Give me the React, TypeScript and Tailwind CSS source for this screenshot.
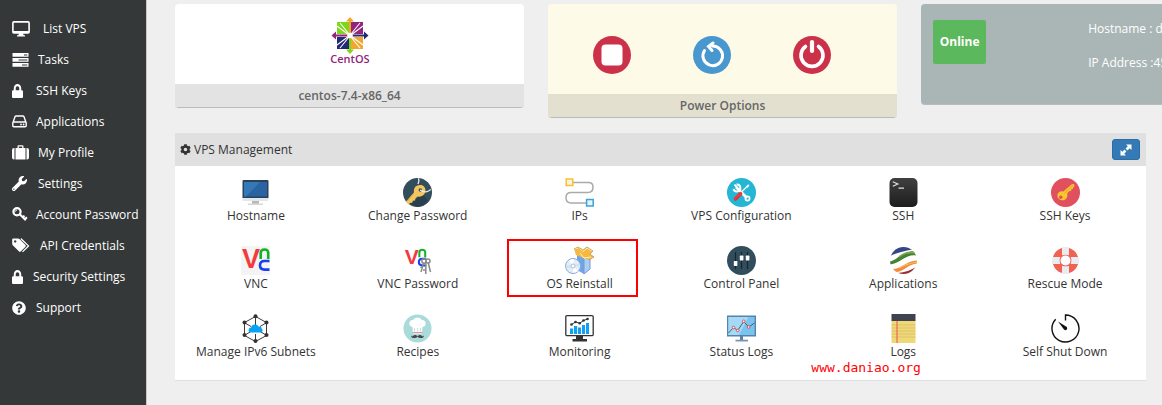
import React from "react";
import { FaCog, FaLock, FaQuestionCircle, FaWrench } from "react-icons/fa";

type Item = { label: string; icon: React.ReactNode };

/* ---------- Sidebar icons ---------- */

const DesktopIcon = () => (
  <svg width="18" height="16" viewBox="0 0 18 16" fill="none">
    <rect x="0.9" y="0.9" width="16.2" height="11" rx="1" stroke="#fff" strokeWidth="1.6" />
    <path d="M1 10h16v2H1zM7 12h4l.6 2.2H13V15.500H5v-1.300h1.400z" fill="#fff" />
  </svg>
);

const TasksIcon = () => (
  <svg width="17" height="14" viewBox="0 0 17 14">
    <path fill="#fff" d="M.5 0h16v3.800H.5zM.5 5h16v3.800H.5zM.5 10h16v3.800H.5z" />
    <path fill="#343838" d="M12 1.400h3.300v1H12zM6.500 6.400h8.800v1H6.500zM10 11.400h5.300v1H10z" />
  </svg>
);

const DriveIcon = () => (
  <svg width="15" height="13" viewBox="0 0 15 13">
    <path
      d="M1 7.500 3 1.800Q3.300 1 4.200 1h6.600q.9 0 1.200.8L14 7.500M1.600 7h11.800q.8 0 .8.800v3q0 1-1 1H1.800q-1 0-1-1v-3q0-.8.8-.8z"
      fill="none"
      stroke="#fff"
      strokeWidth="1.400"
    />
    <circle cx="9" cy="9.500" r=".9" fill="#fff" />
    <circle cx="11.600" cy="9.500" r=".9" fill="#fff" />
  </svg>
);

const SuitcaseIcon = () => (
  <svg width="17" height="15" viewBox="0 0 17 15">
    <path
      fill="#fff"
      d="M2.500 3v11.500H2q-2 0-2-2V5q0-2 2-2zM3.500 3h2V1.300Q5.500.2 6.600.2h3.800q1.100 0 1.100 1.100V3h2v11.500h-10zM6.800 3h3.400V1.500H6.800zM14.500 3h.5q2 0 2 2v7.500q0 2-2 2h-.5z"
      fillRule="evenodd"
    />
  </svg>
);

const KeyIcon = () => (
  <svg width="16" height="15" viewBox="0 0 16 15" fill="none" stroke="#fff">
    <circle cx="5" cy="4.800" r="3.600" strokeWidth="2.200" />
    <path d="m7.500 7 6.300 6.300M10.300 10.800l2.200-2.200M12.300 12.800l2.600-2.600" strokeWidth="2" />
    <path d="m2.600 4.800 2.400-2" strokeWidth="1" />
  </svg>
);

const TagsIcon = () => (
  <svg width="18" height="15" viewBox="0 0 18 15">
    <path
      fill="#fff"
      fillRule="evenodd"
      d="M1.200.5H6q.8 0 1.500.6l6 6q.8.8 0 1.600L8.700 13.600q-.8.700-1.600 0L1 7.500Q.2 6.700.2 5.800V1.500q0-1 1-1zm2 1.700a1.200 1.200 0 1 0 .01 0z"
    />
    <path d="M8.800 1h.4l7.300 6.900-6 6" fill="none" stroke="#fff" strokeWidth="1.300" />
  </svg>
);

const lock = <FaLock className="h-[14px] w-[11px]" preserveAspectRatio="none" />;

const menu: (Item & { slot: string })[] = [
  { label: "List VPS", icon: <DesktopIcon />, slot: "w-[23px]" },
  { label: "Tasks", icon: <TasksIcon />, slot: "w-[18px]" },
  { label: "SSH Keys", icon: lock, slot: "w-4" },
  { label: "Applications", icon: <DriveIcon />, slot: "w-4" },
  { label: "My Profile", icon: <SuitcaseIcon />, slot: "w-[18px]" },
  { label: "Settings", icon: <FaWrench className="size-[15px]" />, slot: "w-[18px]" },
  { label: "Account Password", icon: <KeyIcon />, slot: "w-4" },
  { label: "API Credentials", icon: <TagsIcon />, slot: "w-5" },
  { label: "Security Settings", icon: lock, slot: "w-[13px]" },
  { label: "Support", icon: <FaQuestionCircle className="size-[14px]" />, slot: "w-4" },
];

/* ---------- Panel icons ---------- */

const Art = ({ children }: { children: React.ReactNode }) => (
  <svg width="29" height="29" viewBox="0 0 29 29" fill="none" aria-hidden="true">
    {children}
  </svg>
);

const HostnameArt = (
  <Art>
    <path d="M2.500 2h24q1 0 1 1v17h-26V3q0-1 1-1z" fill="#2c4258" />
    <path d="M1.500 20h26v2q0 1-1 1h-24q-1 0-1-1z" fill="#e4e7e9" />
    <path d="M3 4h23v14.500H3z" fill="#2a63a2" />
    <path d="M3 4h16L5 18.500H3z" fill="#3478b8" />
    <path d="M11 23h7v3h-7z" fill="#b4babe" />
    <path d="M7 25.500h15V27H7z" fill="#d6d9db" />
  </Art>
);

const ChangePasswordArt = (
  <Art>
    <circle cx="14.500" cy="14.500" r="14.500" fill="#324d5b" />
    <path d="m20 17 5 5q-4 6-11 7l-8-4z" fill="#293f4b" />
    <path
      d="M12.500 8.500q2-2 6-1.500 3.500 1 4 5-.2 4.500-3.500 6-2.500 1-4.500.5l-2.200 2.200-.2 1.800-2 .3-1 2-2.300.3-1 1.500-3-2.800 8-9q-.8-3.500 1.700-6.300z"
      fill="#f4c55c"
    />
    <path d="m11 15-7 8.500" stroke="#dba545" />
    <circle cx="17.300" cy="12" r="1.700" fill="#324d5b" />
    <path d="M15.500.3q1 2-.5 5.700M17 12q5 3 8.500 1l2.300-1.500" stroke="#e8eef0" strokeWidth="1.300" />
  </Art>
);

const IpsArt = (
  <Art>
    <path
      d="M8 4.500h15.500q4.500 0 4.500 4.500 0 5.500-5 5.500H6q-5 0-5 5.200 0 5.200 5 5.200h15"
      stroke="#aaa"
      strokeWidth="1.500"
    />
    <path d="M1.200 1h6.600v6.600H1.200z" fill="#f5f1e4" stroke="#fbc02d" strokeWidth="1.500" />
    <path d="M21.600 21.500h6.600v6.600h-6.600z" fill="#e7f3fa" stroke="#3ba3db" strokeWidth="1.500" />
  </Art>
);

const ConfigArt = (
  <Art>
    <circle cx="14.500" cy="14.500" r="14.500" fill="#24b6d4" />
    <path d="m9 9 11 11" stroke="#fff" strokeWidth="2.600" />
    <path d="M9.500 6.500a3.500 3.500 0 1 1-3 4.500M7.500 6.500l2 2.500" stroke="#fff" strokeWidth="2" />
    <circle cx="20.500" cy="20.500" r="2.100" stroke="#fff" strokeWidth="1.700" />
    <path d="m13.500 15 8-8" stroke="#eef4f6" strokeWidth="1.400" />
    <path d="m19 8.500 2.500-2 1 .8-2.200 2.800z" fill="#fff" />
    <path d="m8.500 20.800 5-5" stroke="#e53d3d" strokeWidth="3.800" strokeLinecap="round" />
    <path d="m8.300 22.500 4-4" stroke="#bd2f35" strokeWidth=".8" />
  </Art>
);

const SshArt = (
  <Art>
    <defs>
      <linearGradient id="terminal" x1="0" y1="0" x2="0" y2="1">
        <stop stopColor="#414141" />
        <stop offset=".55" stopColor="#2c2c2c" />
        <stop offset="1" stopColor="#1d1d1d" />
      </linearGradient>
    </defs>
    <rect x=".5" width="28" height="29" rx="5" fill="url(#terminal)" />
    <path d="m3.800 3.800 5 2.200-5 2.200M9.500 10.200h5.500" stroke="#e0e0e0" strokeWidth="1.200" />
  </Art>
);

const SshKeysArt = (
  <Art>
    <circle cx="14.500" cy="14.500" r="14.500" fill="#e0505e" />
    <path
      fillRule="evenodd"
      d="m12.300 13.500 8.500-7.300 2.200-.2.500 2.200-1.200 1-.2 1.500-1.700.3-.2 1.700-2 .5-2 2q1 4-2 6.200-3.300 2-6.200-.3-2.700-2.800-1-5.800 2-3 5.300-1.800zm-2.500 4a1.700 1.700 0 1 0 .01 0z"
      fill="#f8c62e"
    />
    <path d="m13.500 15 8.500-7.500" stroke="#dfa024" strokeWidth=".8" />
  </Art>
);

const VncLetters = () => (
  <g fontFamily="Liberation Sans, sans-serif" fontWeight="700">
    <text x="1" y="22" fontSize="27" fill="#f33a3d">V</text>
    <path d="M19.700 13V7q0-3.500 3.800-3.500T27.200 7v6" stroke="#10b422" strokeWidth="2.600" />
    <path d="M28.500 15h-5q-4.500 0-4.500 4.300t4.500 4.300h5" stroke="#1740f0" strokeWidth="2.600" />
  </g>
);

const VncArt = (
  <Art>
    <path d="M0 0h29v29H0z" fill="#f4f4f4" />
    <VncLetters />
  </Art>
);

const VncPasswordArt = (
  <Art>
    <g transform="translate(1 1) scale(.78)">
      <VncLetters />
    </g>
    <g stroke="#8a8a8a" strokeWidth="1.500">
      <circle cx="21" cy="15" r="2.200" />
      <circle cx="25" cy="15" r="2" />
      <path d="m20.500 17-2.500 9M22.800 17v11M25.300 17l2.200 9M19.500 22l-2-1M22 24h-2" />
    </g>
  </Art>
);

const ReinstallArt = (
  <Art>
    <path d="m12 9 7 4v15l-7-4z" fill="#6ba6e8" />
    <path d="m19 13 6-4v14l-6 5z" fill="#a9cff7" />
    <path d="M11.500 8.500 19 12.500v15.500l6-5V9.500" stroke="#7f94cf" />
    <path d="m9 3 4-2 5 3 4-3 6 4-3 3 4 3-6 3-4-2-8-3z" fill="#f6b83e" />
    <path d="m10 3 4-1.500 4 4 4-3.500 5 3M19 12l-4-5M19 12l7-1" stroke="#fff0b8" />
    <path d="m9 3 4-2 5 3 4-3 6 4-3 3 4 3-5 3" stroke="#b59158" strokeWidth=".7" />
    <circle cx="8" cy="20" r="7.500" fill="#e3edf8" stroke="#8fa8d8" />
    <path d="M8 20 4 14.500q3-2 5-1.500zM8 20l5 5q-2 2-5 1.500z" fill="#fff" />
    <path d="m8 20-6.500-1v4zM8 20l6.500-3v3z" fill="#cbe4ee" />
    <circle cx="8" cy="20" r="2" fill="#fff" stroke="#9aadd0" strokeWidth=".8" />
  </Art>
);

const ControlArt = (
  <Art>
    <circle cx="14.500" cy="14.500" r="14.500" fill="#324d5b" />
    <path d="M8.500 6v17M14.500 6v17M20.500 6v17" stroke="#16252e" strokeWidth="1.200" />
    <rect x="6.800" y="15" width="3.600" height="5" rx=".7" fill="#fff" />
    <rect x="12.800" y="9.500" width="3.600" height="5" rx=".7" fill="#fff" />
    <rect x="18.800" y="9.500" width="3.600" height="5" rx=".7" fill="#fff" />
  </Art>
);

const ApplicationsArt = (
  <Art>
    <defs>
      <clipPath id="globe">
        <circle cx="14.500" cy="14.500" r="13.500" />
      </clipPath>
    </defs>
    <g clipPath="url(#globe)">
      <path d="M1 10Q9 6 26 3L15-1H0z" fill="#354784" />
      <path d="M1 15.500C9 14 13 4 27 5.500v4C17 8 12 17 1 18.500z" fill="#478232" />
      <path d="M10 11q7-6 17-4" stroke="#7fa850" strokeWidth="1.500" />
      <path d="M2 23c10 1 14-8 26-8.500v3c-10 1-13 9-22 8.500z" fill="#f28b3c" />
      <path d="M10 22q7-4 18-6" stroke="#fac067" strokeWidth="1.200" />
      <path d="M9 27q10-1 19-6.500V30H9z" fill="#9a2f31" />
    </g>
  </Art>
);

const RescueArt = (
  <Art>
    <circle cx="14.500" cy="14.500" r="9" stroke="#f26253" strokeWidth="8" />
    <path d="M11 1.300q3.500-.8 7 0v8q-3.500-1.300-7 0zM11 27.700q3.500.8 7 0v-8q-3.500 1.300-7 0zM1.300 11q-.8 3.500 0 7h8q-1.300-3.500 0-7zM27.700 11q.8 3.500 0 7h-8q1.300-3.500 0-7z" fill="#e9edf0" />
  </Art>
);

const SubnetsArt = (
  <Art>
    <path
      d="m14.500 2.500 11 6v13l-11 6-11-6v-13zM14.500 3v8M14.500 20v7M4 9l6 3.500M25 9l-6 3.500M4 21l6-3.500M25 21l-6-3.500"
      stroke="#3b3b3b"
      strokeWidth="1"
    />
    <g fill="#333">
      <circle cx="14.500" cy="2.300" r="2" />
      <circle cx="25.500" cy="8.500" r="2" />
      <circle cx="25.500" cy="21" r="2" />
      <circle cx="14.500" cy="27" r="2" />
      <circle cx="3.500" cy="21" r="2" />
      <circle cx="3.500" cy="8.500" r="2" />
    </g>
    <path d="M10.500 18.500q-3 0-3-2.500 0-2.300 2.500-2.500.7-3 4-3 2.500-.2 3.500 2 3.200-.2 3.200 2.300 1 .7 1 1.700-.2 2-2.700 2z" fill="#08a3f2" />
  </Art>
);

const RecipesArt = (
  <Art>
    <circle cx="14.500" cy="14.500" r="14" fill="#a9dbda" />
    <path d="M9.500 13q-3.500-.7-3.200-4Q7 5.800 10 6q1.300-2.500 4.500-2.500T19 6q3-.2 3.700 3 .3 3.300-3.200 4l-.5 6.500H10z" fill="#fff" />
    <path d="M10 18.500h9.500" stroke="#f08a91" />
    <path d="M11.500 14v3.500M14.500 14v3.500M17.500 14v3.500" stroke="#ccd6da" strokeWidth=".9" />
    <path d="M8 21.500q.2 3 4 2.500 2-.3 2.500-1.500.5 1.200 2.500 1.500 3.800.5 4-2.500l-1.500 1q-1-2-3-1.500l-2 1-2-1q-2-.5-3 1.500z" fill="#46474c" />
  </Art>
);

const MonitoringArt = (
  <Art>
    <rect x=".8" y="1.600" width="27.400" height="20" rx="1.200" fill="#fff" stroke="#333" strokeWidth="1.300" />
    <path d="M11 22h7v3h4v2.500H7.500V25H11z" fill="#333" />
    <path d="M5 14.500h3.200V20H5zM9 12h3.200v8H9zM13 13.500h3V20h-3zM17 11h3v9h-3zM21 9h3v11h-3z" fill="#11a0f3" />
    <path d="M6.500 10.500 10.500 8l4.200 1.200L18.500 6.500l4-1.500" stroke="#333" strokeWidth="1" />
    <g fill="#333">
      <circle cx="6.500" cy="10.500" r="1.300" />
      <circle cx="10.500" cy="8" r="1.300" />
      <circle cx="14.700" cy="9.200" r="1.300" />
      <circle cx="18.500" cy="6.500" r="1.300" />
      <circle cx="22.500" cy="5" r="1.300" />
    </g>
  </Art>
);

const StatusArt = (
  <Art>
    <path d="M.7 2.200h27.600v19.600H.7z" fill="#76c4ef" stroke="#5a82a8" strokeWidth="1.400" />
    <path d="M1.400 3h20L12 21H1.400z" fill="#a4daf6" />
    <path d="M13 22h3v4h-3z" fill="#5d81a2" />
    <path d="M8.500 25.700H21V27.500H8.500z" fill="#7697b4" />
    <path d="m1.500 19 5-5.500 4.200 3 6-9 5 5.500L27.500 9" stroke="#41617d" strokeWidth="1" />
    <g fill="#fff" stroke="#e84a4a">
      <circle cx="6.500" cy="13.500" r="1.300" />
      <circle cx="10.700" cy="16.500" r="1.300" />
      <circle cx="16.700" cy="7.300" r="1.300" />
      <circle cx="21.700" cy="13" r="1.300" />
    </g>
  </Art>
);

const LogsArt = (
  <Art>
    <path d="M2.500 6.500h24V29h-24z" fill="#f0d878" />
    <path d="M2.500 0h24v7h-24z" fill="#3f4350" />
    <path d="M2.500 11h24M2.500 14h24M2.500 17h24M2.500 20h24M2.500 23h24" stroke="#d9c167" strokeWidth=".9" />
    <path d="M8 7v22" stroke="#f0524f" />
  </Art>
);

const ShutdownArt = (
  <Art>
    <path d="M14.500 6.500V1A13.500 13.500 0 1 1 4.700 5.200" stroke="#111" strokeWidth="1.400" />
    <path d="m7 7.500 8.800 5.500q1 1.500-.2 2.700-1.300 1-2.600-.2z" fill="#111" />
  </Art>
);

const tools: (Item & { marked?: boolean; note?: string })[] = [
  { label: "Hostname", icon: HostnameArt },
  { label: "Change Password", icon: ChangePasswordArt },
  { label: "IPs", icon: IpsArt },
  { label: "VPS Configuration", icon: ConfigArt },
  { label: "SSH", icon: SshArt },
  { label: "SSH Keys", icon: SshKeysArt },
  { label: "VNC", icon: VncArt },
  { label: "VNC Password", icon: VncPasswordArt },
  { label: "OS Reinstall", icon: ReinstallArt, marked: true },
  { label: "Control Panel", icon: ControlArt },
  { label: "Applications", icon: ApplicationsArt },
  { label: "Rescue Mode", icon: RescueArt },
  { label: "Manage IPv6 Subnets", icon: SubnetsArt },
  { label: "Recipes", icon: RecipesArt },
  { label: "Monitoring", icon: MonitoringArt },
  { label: "Status Logs", icon: StatusArt },
  { label: "Logs", icon: LogsArt, note: "www.daniao.org" },
  { label: "Self Shut Down", icon: ShutdownArt },
];

/* ---------- Cards ---------- */

const CentosLogo = () => (
  <svg width="40" height="50" viewBox="0 0 40 50" aria-label="CentOS">
    <path d="M7 5h12v12H7z" fill="#7cd61b" />
    <path d="M21 5h12v12H21z" fill="#93237c" />
    <path d="M7 20h12v12H7z" fill="#232a75" />
    <path d="M21 20h12v12H21z" fill="#f2a72b" />
    <path
      d="m10 6 9 11M7 9l12 9M30 6l-9 11M33 9l-12 9M10 31l9-11M7 28l12-9M30 31l-9-11M33 28l-12-9"
      stroke="#fff"
      strokeWidth="1.100"
    />
    <path d="M20 0l4 4.500h-3V17h-2V4.500h-3z" fill="#f2a72b" />
    <path d="M20 37l4-4.500h-3V20h-2v12.500h-3z" fill="#7cd61b" />
    <path d="M1.500 18.500 6 14.500v3h12v2H6v3z" fill="#93237c" />
    <path d="M38.500 18.500 34 14.500v3H22v2h12v3z" fill="#232a75" />
    <circle cx="20" cy="18.500" r="2.800" fill="#fff" />
    <text x="20" y="46" textAnchor="middle" fontFamily="Open Sans, sans-serif" fontWeight="600" fontSize="11" fill="#93237c">
      CentOS
    </text>
  </svg>
);

const powerButtons = [
  {
    name: "Stop",
    art: (
      <>
        <circle cx="19" cy="19" r="19" fill="#cb3249" />
        <rect x="8.500" y="8.500" width="21" height="21" rx="4" fill="#fff" />
      </>
    ),
  },
  {
    name: "Restart",
    art: (
      <>
        <circle cx="19" cy="19" r="19" fill="#4997cf" />
        <path d="M11.500 14.500A9.800 9.800 0 1 0 19.500 10" fill="none" stroke="#fff" strokeWidth="3" strokeLinecap="round" />
        <path d="M20 7 15.500 10.500l3.500 4" fill="none" stroke="#fff" strokeWidth="3" strokeLinecap="round" />
      </>
    ),
  },
  {
    name: "Power off",
    art: (
      <>
        <circle cx="19" cy="19" r="19" fill="#cb3249" />
        <path d="M12.500 10.500a11 11 0 1 0 13 0" fill="none" stroke="#fff" strokeWidth="3.600" strokeLinecap="round" />
        <path d="M19 6v9" stroke="#fff" strokeWidth="4.200" strokeLinecap="round" />
      </>
    ),
  },
];

export default function App() {
  return (
    <div className="flex min-h-screen overflow-hidden bg-[#efefef] font-['Open_Sans',sans-serif] text-xs text-[#333]">
      <nav className="w-[147px] shrink-0 border-r border-[#c8c8c8] bg-[#343838] pt-[13px] pl-3 text-white">
        <ul>
          {menu.map(({ label, icon, slot }) => (
            <li key={label}>
              <a href="#" className="flex h-[31px] items-center gap-2 whitespace-nowrap">
                <span className={`${slot} shrink-0`}>{icon}</span>
                {label}
              </a>
            </li>
          ))}
        </ul>
      </nav>

      <main className="min-w-0 flex-1 pt-1 pr-4 pl-7">
        <section className="grid grid-cols-[repeat(3,35.95%)] items-start gap-6">
          <div className="overflow-hidden rounded border-b border-[#bbb] bg-white">
            <div className="flex h-20 justify-center pt-[13px]">
              <CentosLogo />
            </div>
            <div className="bg-[#e3e3e3] text-center leading-[23px] font-semibold text-[#666]">centos-7.4-x86_64</div>
          </div>

          <div className="overflow-hidden rounded border-b border-[#bbb] bg-[#fefae8]">
            <div className="flex h-[90px] gap-[62px] pt-8 pl-[45px]">
              {powerButtons.map(({ name, art }) => (
                <button key={name} aria-label={name} className="size-[38px]">
                  <svg width="38" height="38" viewBox="0 0 38 38">
                    {art}
                  </svg>
                </button>
              ))}
            </div>
            <div className="bg-[#e3e0d0] text-center leading-[23px] font-semibold text-[#666]">Power Options</div>
          </div>

          <div className="grid h-[101px] grid-cols-[155px_1fr] rounded border-b border-[#bbb] bg-[#aab6b6] pl-3 text-white">
            <div className="pt-4">
              <span className="flex h-11 w-[53px] items-center justify-center rounded-xs bg-[#5cb85c] font-bold">Online</span>
            </div>
            <div className="pt-2 leading-[34px] whitespace-nowrap">
              <p>Hostname : d</p>
              <p>IP Address :45</p>
            </div>
          </div>
        </section>

        <section className="mt-[15px] border-b border-[#e0e0e0] bg-white">
          <header className="flex h-[33px] items-center justify-between bg-[#e0e0e0] pr-1.5 pl-[5px]">
            <h2 className="flex items-center gap-[3px]">
              <FaCog className="size-[11px]" />
              VPS Management
            </h2>
            <button
              aria-label="Expand"
              className="flex h-[21px] w-7 items-center justify-center rounded-[3px] border border-[#2e6da4] bg-[#337ab7]"
            >
              <svg width="12" height="12" viewBox="0 0 12 12" fill="#fff">
                <path d="M6 .5h5.500V6L9.700 4.200 7.500 6.400 5.600 4.500l2.200-2.200zM6 11.500H.5V6l1.800 1.800 2.200-2.200 1.900 1.900-2.200 2.200z" />
              </svg>
            </button>
          </header>
          <div className="grid grid-cols-6 gap-y-[21px] pt-3 pb-[19px]">
            {tools.map(({ label, icon, marked, note }) => (
              <div key={label} className="relative">
                <a href="#" className="flex flex-col items-center leading-[18px] whitespace-nowrap">
                  {icon}
                  {label}
                </a>
                {marked && <span className="absolute -top-[7px] left-2 h-[58px] w-[131px] border-2 border-[#f00]" />}
                {note && (
                  <span className="absolute top-full -left-[11px] font-['DejaVu_Sans_Mono',monospace] text-[13px] leading-[14px] text-[#f00]">
                    {note}
                  </span>
                )}
              </div>
            ))}
          </div>
        </section>
      </main>
    </div>
  );
}
